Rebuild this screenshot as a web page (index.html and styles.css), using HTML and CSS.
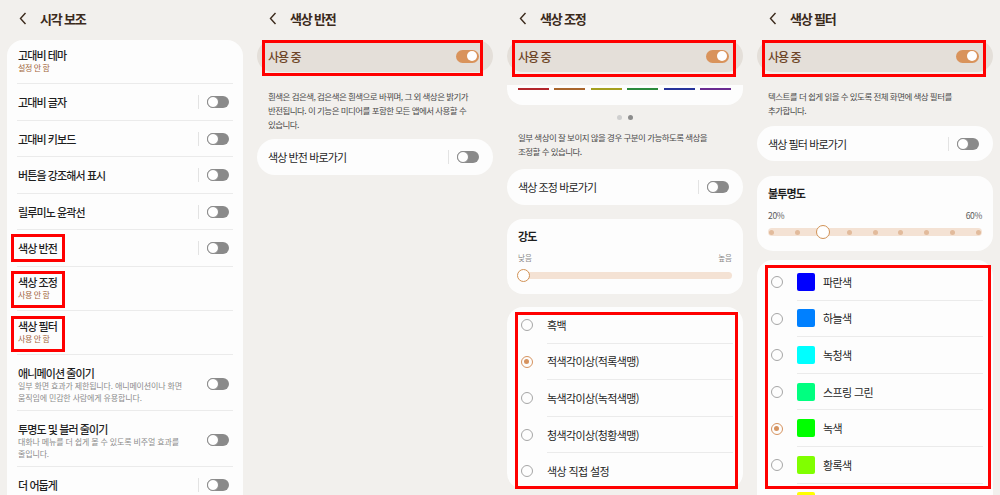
FILE: index.html
```html
<!DOCTYPE html>
<html lang="ko">
<head>
    <meta charset="UTF-8">
    <meta name="viewport" content="width=device-width, initial-scale=1.0">
    <title>시각 보조 - 색상 설정</title>
    <link rel="stylesheet" href="styles.css">
</head>
<body>
<div class="screens">

    <!-- 1: 시각 보조 -->
    <section class="screen">
        <header class="bar">
            <svg class="back" width="8" height="13" viewBox="0 0 8 13"><path d="M6.5 1 1.5 6.5l5 5.5" fill="none" stroke="#3b2a1c" stroke-width="1.4"/></svg>
            <h1>시각 보조</h1>
        </header>
        <div class="card list">
            <div class="row sub-row">
                <div class="label"><div class="name">고대비 테마</div><div class="sub">설정 안 함</div></div>
            </div>
            <div class="row"><div class="name">고대비 글자</div><span class="sep"></span><span class="switch"></span></div>
            <div class="row"><div class="name">고대비 키보드</div><span class="sep"></span><span class="switch"></span></div>
            <div class="row"><div class="name">버튼을 강조해서 표시</div><span class="sep"></span><span class="switch"></span></div>
            <div class="row"><div class="name">릴루미노 윤곽선</div><span class="sep"></span><span class="switch"></span></div>
            <div class="row"><div class="name">색상 반전</div><span class="sep"></span><span class="switch"></span></div>
            <div class="row sub-row">
                <div class="label"><div class="name">색상 조정</div><div class="sub">사용 안 함</div></div>
            </div>
            <div class="row sub-row">
                <div class="label"><div class="name">색상 필터</div><div class="sub">사용 안 함</div></div>
            </div>
            <div class="row desc-row">
                <div class="label">
                    <div class="name">애니메이션 줄이기</div>
                    <div class="desc">일부 화면 효과가 제한됩니다. 애니메이션이나 화면<br>움직임에 민감한 사람에게 유용합니다.</div>
                </div>
                <span class="switch"></span>
            </div>
            <div class="row desc-row">
                <div class="label">
                    <div class="name">투명도 및 블러 줄이기</div>
                    <div class="desc">대화나 메뉴를 더 쉽게 볼 수 있도록 비주얼 효과를<br>줄입니다.</div>
                </div>
                <span class="switch"></span>
            </div>
            <div class="row"><div class="name">더 어둡게</div><span class="sep"></span><span class="switch"></span></div>
        </div>
        <div class="mark m-invert"></div>
        <div class="mark m-adjust"></div>
        <div class="mark m-filter"></div>
    </section>

    <!-- 2: 색상 반전 -->
    <section class="screen">
        <header class="bar">
            <svg class="back" width="8" height="13" viewBox="0 0 8 13"><path d="M6.5 1 1.5 6.5l5 5.5" fill="none" stroke="#3b2a1c" stroke-width="1.4"/></svg>
            <h1>색상 반전</h1>
        </header>
        <div class="pill"><span>사용 중</span><span class="switch on"></span></div>
        <p class="info">흰색은 검은색, 검은색은 흰색으로 바뀌며, 그 외 색상은 밝기가<br>반전됩니다. 이 기능은 미디어를 포함한 모든 앱에서 사용할 수<br>있습니다.</p>
        <div class="card shortcut"><div class="name">색상 반전 바로가기</div><span class="sep"></span><span class="switch"></span></div>
        <div class="mark m-pill"></div>
    </section>

    <!-- 3: 색상 조정 -->
    <section class="screen">
        <header class="bar">
            <svg class="back" width="8" height="13" viewBox="0 0 8 13"><path d="M6.5 1 1.5 6.5l5 5.5" fill="none" stroke="#3b2a1c" stroke-width="1.4"/></svg>
            <h1>색상 조정</h1>
        </header>
        <div class="pill"><span>사용 중</span><span class="switch on"></span></div>
        <div class="strip">
            <span class="c-red"></span><span class="c-orange"></span><span class="c-yellow"></span>
            <span class="c-green"></span><span class="c-blue"></span><span class="c-purple"></span>
        </div>
        <div class="dots"><span></span><span class="active"></span></div>
        <p class="info adjust-info">일부 색상이 잘 보이지 않을 경우 구분이 가능하도록 색상을<br>조정할 수 있습니다.</p>
        <div class="card shortcut short-a"><div class="name">색상 조정 바로가기</div><span class="sep"></span><span class="switch"></span></div>
        <div class="card slider-card">
            <div class="name bold">강도</div>
            <div class="ends"><span>낮음</span><span>높음</span></div>
            <div class="track"><span class="knob"></span></div>
        </div>
        <div class="card radios">
            <div class="opt-row"><span class="radio"></span><div class="opt">흑백</div></div>
            <div class="opt-row"><span class="radio checked"></span><div class="opt">적색각이상(적록색맹)</div></div>
            <div class="opt-row"><span class="radio"></span><div class="opt">녹색각이상(녹적색맹)</div></div>
            <div class="opt-row"><span class="radio"></span><div class="opt">청색각이상(청황색맹)</div></div>
            <div class="opt-row"><span class="radio"></span><div class="opt">색상 직접 설정</div></div>
        </div>
        <div class="mark m-pill3"></div>
        <div class="mark m-list3"></div>
    </section>

    <!-- 4: 색상 필터 -->
    <section class="screen">
        <header class="bar">
            <svg class="back" width="8" height="13" viewBox="0 0 8 13"><path d="M6.5 1 1.5 6.5l5 5.5" fill="none" stroke="#3b2a1c" stroke-width="1.4"/></svg>
            <h1>색상 필터</h1>
        </header>
        <div class="pill"><span>사용 중</span><span class="switch on"></span></div>
        <p class="info">텍스트를 더 쉽게 읽을 수 있도록 전체 화면에 색상 필터를<br>추가합니다.</p>
        <div class="card shortcut short-f"><div class="name">색상 필터 바로가기</div><span class="sep"></span><span class="switch"></span></div>
        <div class="card slider-card opacity">
            <div class="name bold">불투명도</div>
            <div class="ends pct"><span>20%</span><span>60%</span></div>
            <div class="track stepped">
                <i></i><i></i><i class="hidden"></i><i></i><i></i><i></i><i></i><i></i><i></i>
                <span class="knob"></span>
            </div>
        </div>
        <div class="card radios filters">
            <div class="opt-row"><span class="radio"></span><div class="opt"><span class="swatch sw-blue"></span>파란색</div></div>
            <div class="opt-row"><span class="radio"></span><div class="opt"><span class="swatch sw-sky"></span>하늘색</div></div>
            <div class="opt-row"><span class="radio"></span><div class="opt"><span class="swatch sw-cyan"></span>녹청색</div></div>
            <div class="opt-row"><span class="radio"></span><div class="opt"><span class="swatch sw-spring"></span>스프링 그린</div></div>
            <div class="opt-row"><span class="radio checked"></span><div class="opt"><span class="swatch sw-green"></span>녹색</div></div>
            <div class="opt-row"><span class="radio"></span><div class="opt"><span class="swatch sw-lime"></span>황록색</div></div>
            <div class="opt-row"><span class="radio"></span><div class="opt"><span class="swatch sw-yellow"></span>노란색</div></div>
        </div>
        <div class="mark m-pill4"></div>
        <div class="mark m-list4"></div>
    </section>

</div>
</body>
</html>
```

FILE: styles.css
```css
body {
    margin: 0;
    background-color: #f2f0ed;
    font-family: "Noto Sans CJK KR", "Noto Sans", sans-serif;
    color: #1f1f1f;
}

.screens {
    display: flex;
    width: 1000px;
    height: 495px;
}

.screen {
    position: relative;
    width: 250px;
    height: 495px;
    overflow: hidden;
    background-color: #f2f0ed;
}

/* header */
.bar {
    display: flex;
    align-items: center;
    height: 36px;
    padding-left: 19px;
    margin-bottom: 4px;
}

.back {
    display: block;
    margin-right: 13px;
}

.bar h1 {
    margin: 0;
    font-size: 13px;
    font-weight: 700;
    letter-spacing: -1.2px;
    color: #3b2a1c;
}

/* cards and rows */
.card {
    margin: 0 7px;
    background-color: #fdfdfd;
    border-radius: 16px;
}

.list {
    padding: 0 10px 30px;
    border-radius: 16px 16px 0 0;
}

.row {
    display: flex;
    align-items: center;
    padding: 11px 4px 10.5px 1px;
    border-bottom: 1px solid #ebebeb;
}

.row.sub-row {
    padding: 8px 4px 9px 1px;
}

.row.desc-row {
    padding: 11px 4px 7px 1px;
}

.label {
    flex: 1;
}

.name {
    flex: 1;
    font-size: 11px;
    line-height: 14px;
    font-weight: 500;
    letter-spacing: -0.9px;
    color: #1f1f1f;
}

.name.bold {
    font-weight: 700;
}

.sub {
    font-size: 8px;
    line-height: 12px;
    letter-spacing: -0.4px;
    color: #a3663b;
}

.desc {
    font-size: 8px;
    line-height: 12px;
    letter-spacing: -0.15px;
    color: #8c8c8c;
}

.desc-row .desc {
    margin-bottom: -1px;
}

.sep {
    width: 1px;
    height: 14px;
    margin-right: 8px;
    background-color: #e3e3e3;
}

/* toggles */
.switch {
    position: relative;
    flex: none;
    width: 22px;
    height: 12px;
    border-radius: 6px;
    background-color: #8a8a8a;
}

.switch::after {
    content: "";
    position: absolute;
    left: 0;
    top: 0;
    width: 12px;
    height: 12px;
    box-sizing: border-box;
    border: 1.5px solid #8a8a8a;
    border-radius: 50%;
    background-color: #fff;
}

.switch.on {
    width: 23px;
    height: 13px;
    border-radius: 7px;
    background-color: #d9935b;
}

.switch.on::after {
    left: auto;
    right: 2px;
    top: 1.5px;
    width: 10px;
    height: 10px;
    border: none;
}

/* "사용 중" bar */
.pill {
    display: flex;
    align-items: center;
    justify-content: space-between;
    height: 32px;
    margin: 2px 7px 0;
    padding: 0 14px 0 11px;
    border-radius: 16px;
    background-color: #e4dfd9;
    font-size: 12px;
    font-weight: 500;
    letter-spacing: -1px;
    color: #6e4526;
}

.info {
    margin: 17px 0 0;
    padding: 0 18px;
    font-size: 8.5px;
    line-height: 14px;
    letter-spacing: -0.55px;
    color: #4a4a4a;
    white-space: nowrap;
}

.shortcut {
    display: flex;
    align-items: center;
    height: 36px;
    margin-top: 8px;
    padding: 0 14px 0 11px;
    border-radius: 18px;
}

.shortcut .name {
    font-weight: 400;
}

/* 색상 조정 */
.strip {
    display: flex;
    justify-content: space-between;
    height: 17px;
    margin: 13px 7px 0;
    padding: 3px 12px 0 11px;
    background-color: #fdfdfd;
    border-radius: 0 0 16px 16px;
}

.strip span {
    width: 31px;
    height: 2px;
}

.c-red { background-color: #b3262b; }
.c-orange { background-color: #a9652b; }
.c-yellow { background-color: #a5a01f; }
.c-green { background-color: #2b8a3c; }
.c-blue { background-color: #27339b; }
.c-purple { background-color: #6a2a90; }

.dots {
    display: flex;
    justify-content: center;
    gap: 6px;
    margin-top: 10px;
}

.dots span {
    width: 5px;
    height: 5px;
    border-radius: 50%;
    background-color: #cfcfcf;
}

.dots .active {
    background-color: #8c8c8c;
}

.adjust-info {
    margin-top: 10px;
}

.short-a {
    margin-top: 11px;
}

.slider-card {
    margin-top: 14px;
    padding: 10px 11px 15px;
}

.ends {
    display: flex;
    justify-content: space-between;
    margin-top: 9px;
    font-size: 7.5px;
    line-height: 12px;
    color: #8a8a8a;
}

.track {
    position: relative;
    height: 7px;
    margin-top: 8px;
    border-radius: 4px;
    background-color: #f4e2d4;
}

.knob {
    position: absolute;
    left: -1px;
    top: -3px;
    width: 13px;
    height: 13px;
    box-sizing: border-box;
    border: 1.5px solid #d19256;
    border-radius: 50%;
    background-color: #fff;
}

.radios {
    margin-top: 13px;
    padding: 0 10px 0 14px;
}

.opt-row {
    display: flex;
    align-items: center;
}

.radio {
    flex: none;
    width: 12px;
    height: 12px;
    margin-right: 14px;
    box-sizing: border-box;
    border: 1.3px solid #a6a6a6;
    border-radius: 50%;
    position: relative;
}

.radio.checked {
    border-color: #d6935f;
}

.radio.checked::after {
    content: "";
    position: absolute;
    left: 2px;
    top: 2px;
    width: 5.4px;
    height: 5.4px;
    border-radius: 50%;
    background-color: #d6935f;
}

.opt {
    flex: 1;
    display: flex;
    align-items: center;
    padding: 10.8px 0;
    border-bottom: 1px solid #ebebeb;
    font-size: 11px;
    line-height: 14px;
    letter-spacing: -0.6px;
    color: #1f1f1f;
}

.opt-row:last-child .opt {
    border-bottom: none;
}

/* 색상 필터 */
.short-f {
    margin-top: 9px;
    height: 35px;
}

.opacity {
    margin-top: 15px;
}

.pct {
    margin-top: 9px;
    font-size: 8.5px;
    color: #5a5a5a;
    letter-spacing: -0.3px;
}

.stepped {
    display: flex;
    align-items: center;
    justify-content: space-between;
    margin-top: 7px;
    padding: 0 1px;
    height: 8px;
}

.stepped i {
    width: 5px;
    height: 5px;
    border-radius: 50%;
    background-color: #e2bb9c;
}

.stepped i.hidden {
    visibility: hidden;
}

.stepped .knob {
    left: 48px;
    top: -3px;
    width: 14px;
    height: 14px;
}

.filters {
    margin-top: 9px;
    padding-top: 4px;
}

.filters .opt {
    padding: 8.8px 0;
}

.swatch {
    width: 18px;
    height: 18px;
    margin-right: 8px;
    border-radius: 2px;
}

.sw-blue { background-color: #0000ff; }
.sw-sky { background-color: #0080ff; }
.sw-cyan { background-color: #00ffff; }
.sw-spring { background-color: #00ff80; }
.sw-green { background-color: #00ff00; }
.sw-lime { background-color: #80ff00; }
.sw-yellow { background-color: #ffff00; }

/* red highlight boxes drawn over the screenshots */
.mark {
    position: absolute;
    box-sizing: border-box;
    border: 3px solid #ff0000;
}

.m-invert { left: 11px; top: 234px; width: 54px; height: 28px; }
.m-adjust { left: 11px; top: 271px; width: 54px; height: 37px; }
.m-filter { left: 11px; top: 316px; width: 54px; height: 36px; }
.m-pill { left: 12px; top: 40px; width: 221px; height: 36px; }
.m-pill3 { left: 12px; top: 40px; width: 224px; height: 37px; }
.m-list3 { left: 15px; top: 312px; width: 223px; height: 177px; }
.m-pill4 { left: 12px; top: 40px; width: 224px; height: 37px; }
.m-list4 { left: 15px; top: 265px; width: 226px; height: 224px; }
```
